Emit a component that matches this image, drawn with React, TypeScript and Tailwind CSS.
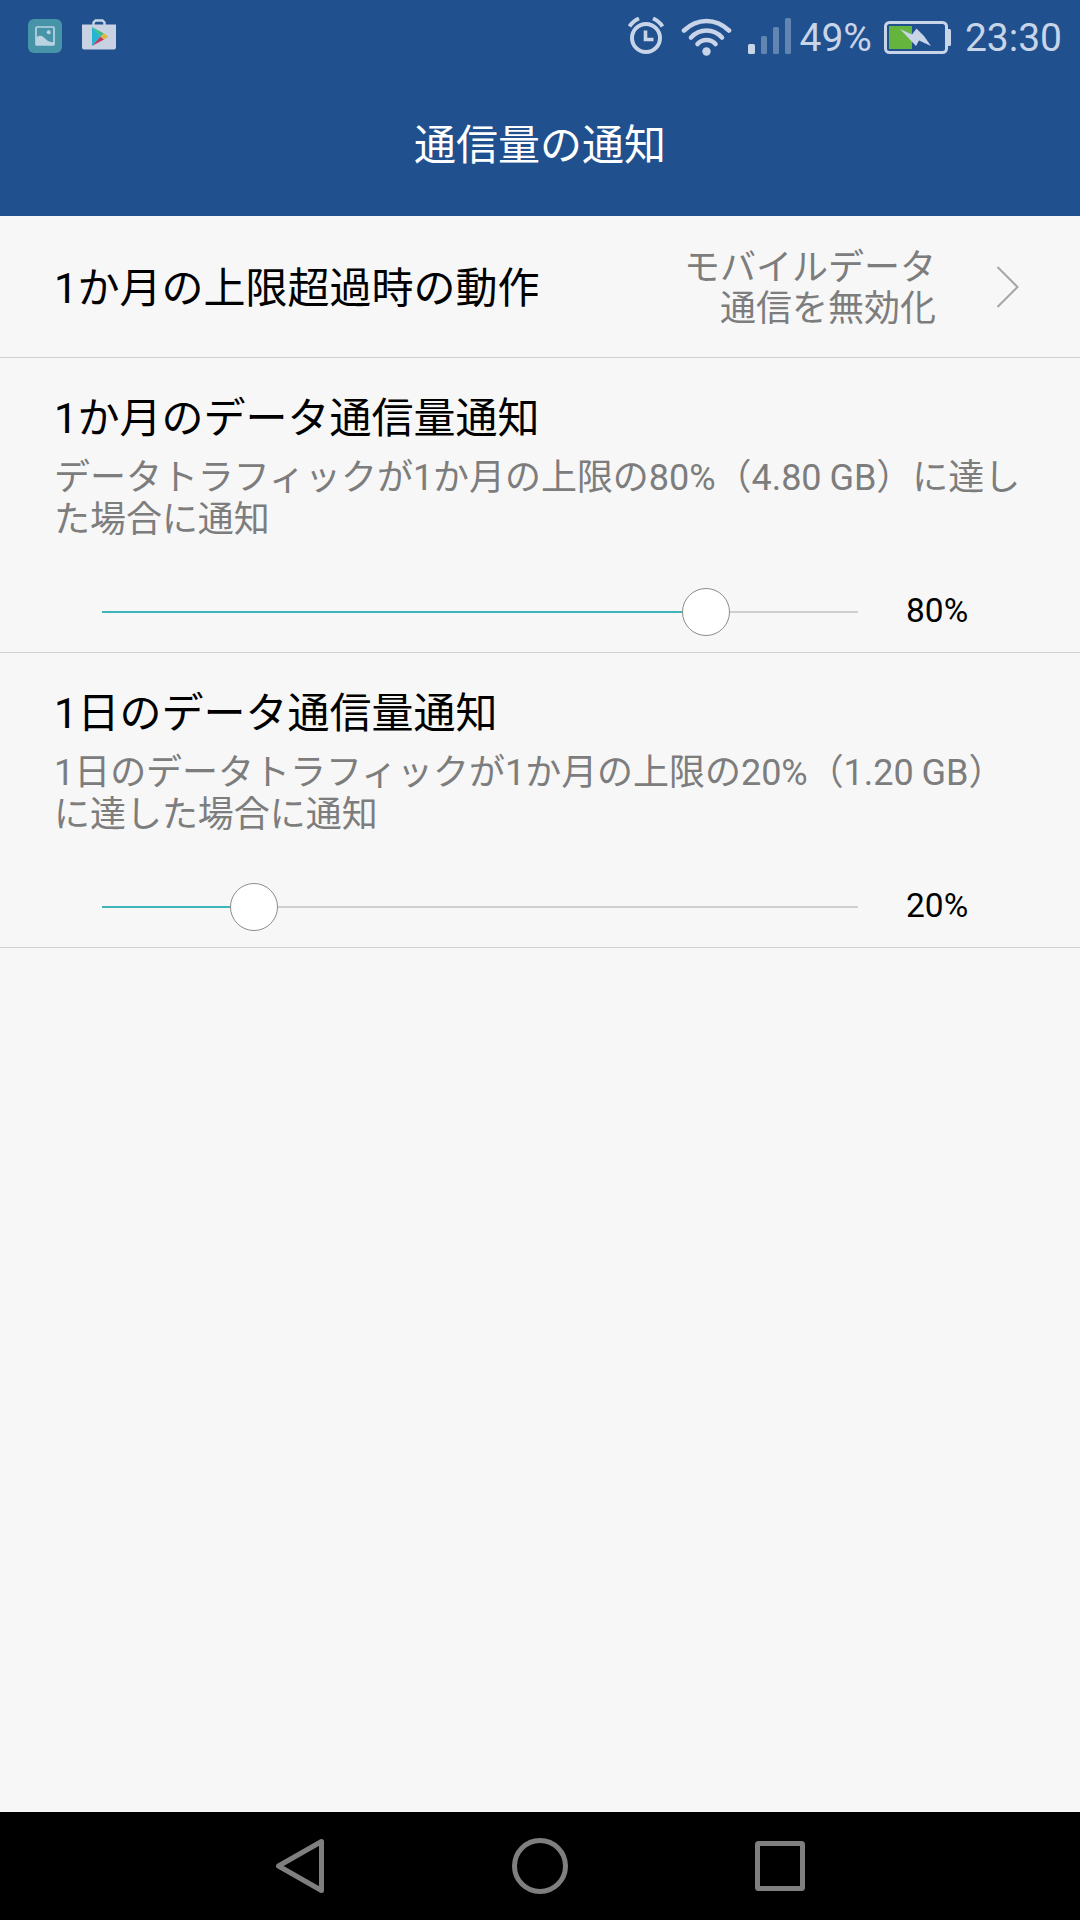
import type { ReactNode } from "react";

interface LimitSectionProps {
  title: string;
  summary: string;
  percent: number;
}

function StatusBar() {
  return (
    <div className="flex h-[72px] items-center pl-7 pr-[18px] text-[#c8d4e8]">
      {/* Notifications */}
      <svg width="34" height="34" viewBox="0 0 34 34" className="shrink-0">
        <rect width="34" height="34" rx="6" fill="#4793a7" />
        <rect x="8" y="8" width="18" height="18" rx="1" fill="none" stroke="#b9d3e2" strokeWidth="1.7" />
        <circle cx="20.7" cy="13.3" r="2" fill="#b9d3e2" />
        <path d="M8 18.5c3-2.5 5.5-2.5 8 0l3 2.8c2 1.500 4 2 7 2V26H8z" fill="#b9d3e2" />
      </svg>
      <svg width="34" height="31" viewBox="0 0 34 31" className="mb-[3px] ml-5 shrink-0">
        <path d="M11.500 6V3.500l2-2h7l2 2V6" fill="none" stroke="#c8d4e8" strokeWidth="2.400" />
        <path d="M0 5.500h34V28.500q0 2-2 2H2q-2 0-2-2z" fill="#c9d2e3" />
        <path d="M10 8v19l8.500-9.500z" fill="#25b4d3" />
        <path d="M10 8l12 6.500-3.500 3z" fill="#35bf86" />
        <path d="M10 27l12-6.500-3.500-3z" fill="#bd3d60" />
        <path d="M18.500 17.500l3.500-3 4.500 3-4.500 3z" fill="#dfb640" />
      </svg>

      {/* Alarm */}
      <svg width="36" height="38" viewBox="0 0 36 38" className="ml-auto shrink-0" fill="none" stroke="currentColor">
        <circle cx="18" cy="21" r="14" strokeWidth="4" />
        <path d="M17.500 13.500v9h8" strokeWidth="3.600" />
        <path d="M1.500 9.500Q5 4 11 1.500M34.500 9.500Q31 4 25 1.500" strokeWidth="4" />
      </svg>
      {/* Wi-Fi */}
      <svg width="51" height="38" viewBox="0 0 51 38" className="ml-[17px] mt-px shrink-0" fill="none" stroke="currentColor" strokeWidth="4.600" strokeLinecap="round">
        <path d="M3 12.500Q13 3 25.500 3T48 12.500" />
        <path d="M10 19.500Q16.500 12.500 25.500 12.500T41 19.500" />
        <path d="M16.500 26Q20 22 25.500 22T34.500 26" />
        <circle cx="25.500" cy="33.500" r="4.200" fill="currentColor" stroke="none" />
      </svg>
      {/* Signal */}
      <svg width="43" height="36" viewBox="0 0 43 36" className="ml-4 shrink-0" fill="currentColor">
        <rect y="26" width="7" height="10" rx="1.500" />
        <g opacity="0.4">
          <rect x="13" y="18" width="6" height="18" rx="1.500" />
          <rect x="25" y="9" width="6" height="27" rx="1.500" />
          <rect x="37" y="0" width="6" height="36" rx="1.500" />
        </g>
      </svg>
      <span className="ml-2 pt-[3px] text-[39px] leading-[46px]">49%</span>
      {/* Battery */}
      <svg width="67" height="33" viewBox="0 0 67 33" className="mt-[3px] ml-3 shrink-0">
        <rect x="1.500" y="1.500" width="61" height="30" rx="4" fill="none" stroke="#c8d4e8" strokeWidth="3" />
        <path d="M63 8h2.500q1.500 0 1.500 1.500v14q0 1.500-1.500 1.500H63z" fill="#c8d4e8" />
        <rect x="5" y="5" width="23" height="23" fill="#65b43e" />
        <path d="M16 8l12 5.500 4.500-6L40 15l7 10-12-5.500-3 5.500z" fill="#c8d4e8" />
      </svg>
      <span className="ml-[14px] pt-[3px] text-[39px] leading-[46px]">23:30</span>
    </div>
  );
}

function LimitSection({ title, summary, percent }: LimitSectionProps) {
  return (
    <section className="border-b border-[#cfcfcf] pb-4 pl-[54px] pt-9">
      <h2 className="text-[42px] leading-[49px] text-black">{title}</h2>
      <p className="mt-[14px] whitespace-pre text-[36px] leading-[42px] tracking-[-0.04px] text-[#7d7d7d] [word-spacing:-1px]">
        {summary}
      </p>
      <div className="mt-[47px] flex h-12 items-center pl-12">
        <div className="relative h-0.5 w-[756px] bg-[#cfcfcf]">
          <div className="h-full bg-[#3fb5b9]" style={{ width: `${percent}%` }} />
          <div className="absolute inset-x-px -top-[23px]">
            <div
              className="relative size-12 -translate-x-1/2 rounded-full border border-[#8c8c8c] bg-white"
              style={{ left: `${percent}%` }}
            />
          </div>
        </div>
        <span className="ml-12 pb-[3px] text-[33.5px] leading-[39px] text-black">{percent}%</span>
      </div>
    </section>
  );
}

function NavButton({ label, children }: { label: string; children: ReactNode }) {
  return (
    <button aria-label={label} className="flex w-[240px] items-center justify-center">
      <svg width="60" height="60" viewBox="0 0 60 60" fill="none" stroke="#7f7f7f" strokeWidth="5" strokeLinejoin="round">
        {children}
      </svg>
    </button>
  );
}

export default function App() {
  return (
    <div
      lang="ja"
      className="flex h-[1920px] w-[1080px] flex-col overflow-hidden bg-[#f7f7f7] font-['Roboto','Noto_Sans_CJK_JP',sans-serif]"
    >
      <header className="h-[216px] bg-[#20508d]">
        <StatusBar />
        <h1 className="pt-[49px] text-center text-[42px] leading-[49px] text-white">通信量の通知</h1>
      </header>

      <main className="flex-1">
        <div className="flex h-[142px] items-center border-b border-[#cfcfcf] pl-[54px] pr-[61px]">
          <h2 className="pt-[3px] text-[42px] leading-[49px] text-black">1か月の上限超過時の動作</h2>
          <p className="ml-auto whitespace-pre pt-1 text-right text-[36px] leading-[41px] text-[#7d7d7d]">
            {"モバイルデータ\n通信を無効化"}
          </p>
          <svg width="22" height="42" viewBox="0 0 22 42" className="ml-[61px] shrink-0" fill="none" stroke="#a6a6a6" strokeWidth="2">
            <path d="M0.500 1l20 20-20 20" />
          </svg>
        </div>

        <LimitSection
          title="1か月のデータ通信量通知"
          summary={"データトラフィックが1か月の上限の80%（4.80 GB）に達し\nた場合に通知"}
          percent={80}
        />
        <LimitSection
          title="1日のデータ通信量通知"
          summary={"1日のデータトラフィックが1か月の上限の20%（1.20 GB）\nに達した場合に通知"}
          percent={20}
        />
      </main>

      <nav className="flex h-[108px] justify-center bg-black">
        <NavButton label="戻る">
          <path d="M8.500 30L51.500 5.500v49z" />
        </NavButton>
        <NavButton label="ホーム">
          <circle cx="30" cy="30" r="25.500" />
        </NavButton>
        <NavButton label="最近">
          <rect x="7.500" y="7.500" width="45" height="45" rx="1" />
        </NavButton>
      </nav>
    </div>
  );
}
